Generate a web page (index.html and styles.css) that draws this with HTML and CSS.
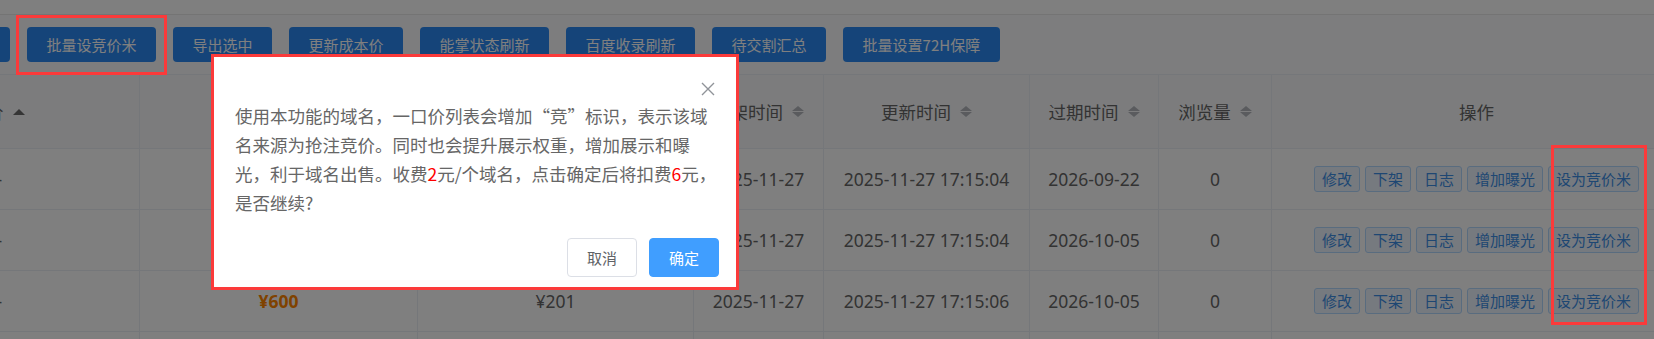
FILE: index.html
```html
<!DOCTYPE html>
<html lang="zh-CN">
<head>
    <meta charset="UTF-8">
    <title>一口价域名管理</title>
    <link rel="stylesheet" href="styles.css">
</head>
<body>
    <div class="page">
        <div class="search-bar"></div>
        <div class="toolbar">
            <button class="btn btn-cut">批量下架</button>
            <button class="btn">批量设竞价米</button>
            <button class="btn">导出选中</button>
            <button class="btn">更新成本价</button>
            <button class="btn">能掌状态刷新</button>
            <button class="btn">百度收录刷新</button>
            <button class="btn">待交割汇总</button>
            <button class="btn">批量设置72H保障</button>
        </div>
        <table class="grid">
            <colgroup>
                <col class="c1"><col class="c2"><col class="c3"><col class="c4">
                <col class="c5"><col class="c6"><col class="c7"><col class="c8">
            </colgroup>
            <thead>
                <tr>
                    <th><span class="th-cell">原价<i class="sort-up"></i></span></th>
                    <th><span class="th-cell">一口价<i class="caret"></i></span></th>
                    <th><span class="th-cell">成本价<i class="caret"></i></span></th>
                    <th><span class="th-cell">上架时间<i class="caret"></i></span></th>
                    <th><span class="th-cell">更新时间<i class="caret"></i></span></th>
                    <th><span class="th-cell">过期时间<i class="caret"></i></span></th>
                    <th><span class="th-cell">浏览量<i class="caret"></i></span></th>
                    <th>操作</th>
                </tr>
            </thead>
            <tbody>
                <tr>
                    <td>--</td>
                    <td class="price">¥600</td>
                    <td>¥201</td>
                    <td>2025-11-27</td>
                    <td>2025-11-27 17:15:04</td>
                    <td>2026-09-22</td>
                    <td>0</td>
                    <td>
                        <div class="ops">
                            <button class="op-btn">修改</button>
                            <button class="op-btn">下架</button>
                            <button class="op-btn">日志</button>
                            <button class="op-btn">增加曝光</button>
                            <button class="op-btn">设为竞价米</button>
                        </div>
                    </td>
                </tr>
                <tr>
                    <td>--</td>
                    <td class="price">¥600</td>
                    <td>¥201</td>
                    <td>2025-11-27</td>
                    <td>2025-11-27 17:15:04</td>
                    <td>2026-10-05</td>
                    <td>0</td>
                    <td>
                        <div class="ops">
                            <button class="op-btn">修改</button>
                            <button class="op-btn">下架</button>
                            <button class="op-btn">日志</button>
                            <button class="op-btn">增加曝光</button>
                            <button class="op-btn">设为竞价米</button>
                        </div>
                    </td>
                </tr>
                <tr>
                    <td>--</td>
                    <td class="price">¥600</td>
                    <td>¥201</td>
                    <td>2025-11-27</td>
                    <td>2025-11-27 17:15:06</td>
                    <td>2026-10-05</td>
                    <td>0</td>
                    <td>
                        <div class="ops">
                            <button class="op-btn">修改</button>
                            <button class="op-btn">下架</button>
                            <button class="op-btn">日志</button>
                            <button class="op-btn">增加曝光</button>
                            <button class="op-btn">设为竞价米</button>
                        </div>
                    </td>
                </tr>
                <tr>
                    <td>--</td>
                    <td class="price">¥600</td>
                    <td>¥201</td>
                    <td>2025-11-27</td>
                    <td>2025-11-27 17:15:08</td>
                    <td>2026-10-05</td>
                    <td>0</td>
                    <td></td>
                </tr>
            </tbody>
        </table>
    </div>

    <div class="mask"></div>

    <div class="dialog">
        <div class="dialog-head">
            <span class="close">
                <svg width="14" height="14" viewBox="0 0 14 14">
                    <path d="M1 1 L13 13 M13 1 L1 13" stroke="#909399" stroke-width="1.4" fill="none"/>
                </svg>
            </span>
        </div>
        <p class="dialog-msg">使用本功能的域名，一口价列表会增加“竞”标识，表示该域名来源为抢注竞价。同时也会提升展示权重，增加展示和曝光，利于域名出售。收费<em>2</em>元/个域名，点击确定后将扣费<em>6</em>元，是否继续?</p>
        <div class="dialog-foot">
            <button class="dlg-btn">取消</button>
            <button class="dlg-btn primary">确定</button>
        </div>
    </div>

    <!-- highlight frames -->
    <div class="mark mark-batch"></div>
    <div class="mark mark-ops"></div>
</body>
</html>
```

FILE: styles.css
```css
* {
    box-sizing: border-box;
}

body {
    margin: 0;
    font-family: "Noto Sans CJK SC", "Noto Sans", sans-serif;
    color: #666;
    background: #fff;
    overflow: hidden;
}

.page {
    width: 1654px;
    height: 339px;
    overflow: hidden;
}

.search-bar {
    height: 15px;
    border-bottom: 1px solid #e8e8e8;
}

.toolbar {
    display: flex;
    gap: 17px;
    padding: 12px 0;
    background: #fafbfc;
}

.btn {
    flex-shrink: 0;
    height: 35px;
    padding: 0 19.5px;
    border: none;
    border-radius: 4px;
    background: #2b89f3;
    color: #fff;
    font-family: inherit;
    font-size: 15px;
    white-space: nowrap;
}

.btn-cut {
    margin-left: -89px;
}

.grid {
    border-collapse: collapse;
    table-layout: fixed;
    width: 1828px;
    margin-left: -147px;
}

.c1 { width: 286px; }
.c2 { width: 278px; }
.c3 { width: 276px; }
.c4 { width: 130px; }
.c5 { width: 206px; }
.c6 { width: 129px; }
.c7 { width: 113px; }
.c8 { width: 410px; }

.grid th,
.grid td {
    border: 1px solid #ebeef5;
    text-align: center;
    font-family: "Noto Sans", "Noto Sans CJK SC", sans-serif;
    font-size: 17.5px;
    font-weight: normal;
    color: #666;
    padding: 0;
    white-space: nowrap;
}

.grid th {
    height: 74px;
    background: #f8f9fb;
    font-family: "Noto Sans CJK SC", sans-serif;
}

.grid td {
    height: 61px;
}

.th-cell {
    display: inline-flex;
    align-items: center;
    gap: 9px;
}

.caret {
    display: inline-flex;
    flex-direction: column;
    gap: 1px;
}

.caret::before,
.caret::after {
    content: "";
    border-left: 6px solid transparent;
    border-right: 6px solid transparent;
}

.caret::before {
    border-bottom: 5px solid #b4b7bd;
}

.caret::after {
    border-top: 5px solid #b4b7bd;
}

.sort-up {
    border-left: 6px solid transparent;
    border-right: 6px solid transparent;
    border-bottom: 6px solid #6a6a6a;
}

.grid td.price {
    font-weight: bold;
    color: #ff8400;
}

.ops {
    display: flex;
    justify-content: center;
    gap: 5px;
}

.op-btn {
    height: 26px;
    padding: 0 7px;
    border: 1px solid #b3d8ff;
    border-radius: 3px;
    background: #ecf5ff;
    color: #3d8ee6;
    font-family: "Noto Sans CJK SC", sans-serif;
    font-size: 15px;
    line-height: 24px;
}

.mask {
    position: fixed;
    inset: 0;
    background: rgba(0, 0, 0, 0.5);
}

.dialog {
    position: fixed;
    left: 211px;
    top: 54px;
    width: 528px;
    background: #fff;
    border: 3px solid #fb3a3a;
    padding: 20px 17px 10px 21px;
}

.dialog-head {
    height: 24px;
    display: flex;
    justify-content: flex-end;
    align-items: center;
}

.close {
    display: flex;
    margin-right: 4px;
}

.dialog-msg {
    margin: 0;
    font-size: 17.5px;
    line-height: 29px;
    color: #666;
}

.dialog-msg em {
    font-style: normal;
    color: #f00;
}

.dialog-foot {
    display: flex;
    justify-content: flex-end;
    gap: 12px;
    margin-top: 21px;
}

.dlg-btn {
    width: 70px;
    height: 39px;
    border: 1px solid #dcdfe6;
    border-radius: 4px;
    background: #fff;
    color: #606266;
    font-family: inherit;
    font-size: 15px;
}

.dlg-btn.primary {
    background: #409eff;
    border-color: #409eff;
    color: #fff;
}

.mark {
    position: fixed;
    border: 3px solid #fb3a3a;
}

.mark-batch {
    left: 16px;
    top: 15px;
    width: 151px;
    height: 60px;
}

.mark-ops {
    left: 1551px;
    top: 145px;
    width: 96px;
    height: 180px;
}
```
